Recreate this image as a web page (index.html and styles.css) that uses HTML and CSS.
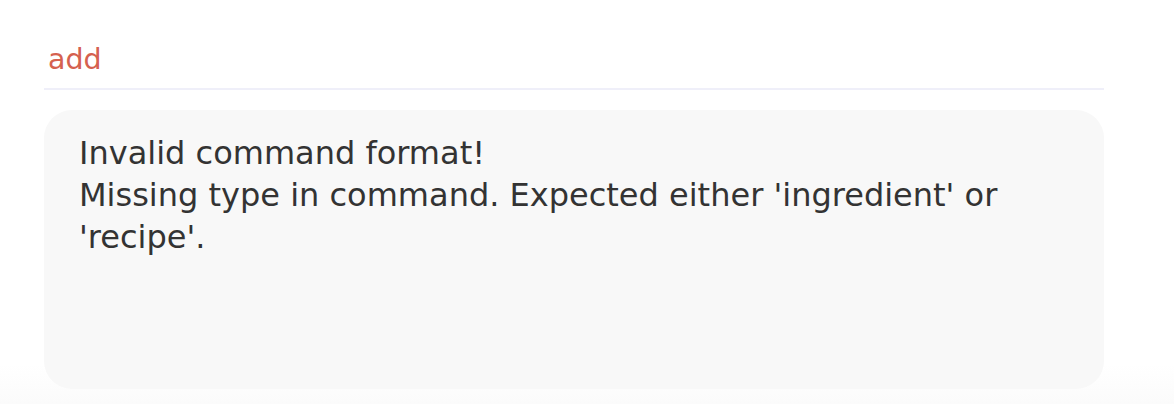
FILE: index.html
```html
<!DOCTYPE html>
<html>
<head>
<meta charset="utf-8">
<link rel="stylesheet" href="styles.css">
</head>
<body>
<div class="page">
  <div class="command">add</div>
  <div class="result">Invalid command format!<br>Missing type in command. Expected either 'ingredient' or 'recipe'.</div>
</div>
<div class="fade"></div>
</body>
</html>
```
FILE: styles.css
```css
html, body {
  margin: 0;
  padding: 0;
  background: #ffffff;
  width: 1174px;
  height: 404px;
  overflow: hidden;
  position: relative;
}
.page {
  padding: 40px 70px 0 44px;
  display: flex;
  flex-direction: column;
  font-family: "DejaVu Sans", sans-serif;
}
.command {
  color: #d5614f;
  font-size: 28.5px;
  line-height: 40px;
  padding: 0 4px 8px;
  border-bottom: 2px solid #efeff9;
}
.result {
  margin-top: 20px;
  height: 279px;
  box-sizing: border-box;
  background: #f8f8f8;
  border-radius: 28px;
  padding: 22px 60px 0 35px;
  color: #333333;
  font-size: 32px;
  line-height: 42px;
}
.fade {
  position: absolute;
  left: 0;
  right: 0;
  bottom: 0;
  height: 40px;
  background: linear-gradient(to bottom, rgba(248,248,248,0), rgba(248,248,248,0.6));
  pointer-events: none;
}
```
